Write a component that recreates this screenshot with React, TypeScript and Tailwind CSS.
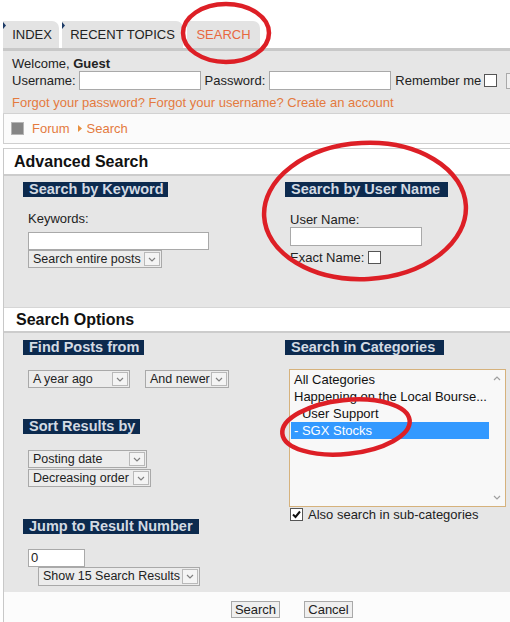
import React from 'react';

function Select({ children, className = '' }: { children: React.ReactNode; className?: string }) {
  return (
    <div className={`flex h-[18px] shrink-0 border border-[#a9a9a9] bg-[#ececec] text-[12.5px] text-[#222] ${className}`}>
      <span className="flex-1 whitespace-nowrap pl-[4px] leading-[16px]">{children}</span>
      <span className="my-[1px] mr-[1px] flex w-[16px] shrink-0 items-center justify-center border border-[#b9b9b9] bg-[#f4f4f4]">
        <svg width="8" height="5" viewBox="0 0 8 5">
          <path d="M1 1l3 3 3-3" stroke="#808080" strokeWidth="1.2" fill="none" />
        </svg>
      </span>
    </div>
  );
}

function Legend({ children, className = '' }: { children: React.ReactNode; className?: string }) {
  return (
    <div className={`h-[15px] whitespace-nowrap bg-[#0c2a4e] pl-[6px] text-[14.5px] font-bold leading-[15px] text-[#d3dae3] ${className}`}>
      {children}
    </div>
  );
}

function Checkbox({ checked = false }: { checked?: boolean }) {
  return (
    <span className="inline-flex h-[13px] w-[13px] shrink-0 items-center justify-center border border-[#555] bg-white">
      {checked && (
        <svg width="9" height="9" viewBox="0 0 9 9">
          <path d="M1 4.5l2.5 2.5L8 1.5" stroke="#111" strokeWidth="2" fill="none" />
        </svg>
      )}
    </span>
  );
}

function TabMark() {
  return (
    <svg className="absolute left-0 top-[1px]" width="3" height="7" viewBox="0 0 3 7">
      <path d="M0 0l3 3.5L0 7z" fill="#1c3a66" />
    </svg>
  );
}

export default function App() {
  return (
    <div className="relative h-[622px] w-[510px] overflow-hidden bg-white font-['Liberation_Sans',Arial,sans-serif] text-[13px] text-[#222]">
      {/* Tabs */}
      <div className="flex h-[48px] items-end pl-[3px]">
        <div className="relative flex h-[27px] w-[56px] items-center justify-center rounded-tr-[7px] bg-[#e3e3e3] pl-[2px]">
          <TabMark />
          INDEX
        </div>
        <div className="relative ml-[3px] flex h-[27px] w-[121px] items-center justify-center rounded-tr-[7px] bg-[#e3e3e3]">
          <TabMark />
          RECENT TOPICS
        </div>
        <div className="ml-[4px] flex h-[27px] w-[73px] items-center justify-center rounded-tl-[3px] rounded-tr-[7px] bg-[#e3e3e3] text-[#e8683f]">
          SEARCH
        </div>
      </div>

      {/* Login */}
      <div className="ml-[3px] h-[66px] w-[527px] border-t-[3px] border-b border-t-[#c8c8c8] border-b-[#d2d2d2] bg-[#e6e6e6] pl-[9px] pt-[5px]">
        <div className="leading-[15px]">
          Welcome, <b>Guest</b>
        </div>
        <div className="flex h-[19px] items-center whitespace-nowrap">
          <span className="shrink-0">Username:</span>
          <span className="ml-[3px] h-[19px] w-[122px] shrink-0 border border-[#a9a9a9] bg-white" />
          <span className="ml-[4px] shrink-0">Password:</span>
          <span className="ml-[4px] h-[19px] w-[122px] shrink-0 border border-[#a9a9a9] bg-white" />
          <span className="ml-[4px] shrink-0">Remember me</span>
          <span className="ml-[3px] flex shrink-0">
            <Checkbox />
          </span>
          <span className="ml-[9px] h-[16px] w-[40px] shrink-0 border border-[#aaa] bg-[#f0f0f0]" />
        </div>
        <div className="mt-[5px] leading-[15px] text-[#e47a3e]">
          Forgot your password? Forgot your username? Create an account
        </div>
      </div>

      {/* Breadcrumb */}
      <div className="ml-[3px] flex h-[30px] items-center border-b border-l border-[#cfcfcf] bg-[#fbfbfb] pl-[7px]">
        <span className="h-[13px] w-[13px] border border-[#b5b5b5] bg-[#858585]" />
        <span className="ml-[8px] text-[#e47a3e]">Forum</span>
        <svg className="ml-[8px]" width="4" height="7" viewBox="0 0 4 7">
          <path d="M0 0l4 3.5L0 7z" fill="#e8903e" />
        </svg>
        <span className="ml-[5px] text-[#e47a3e]">Search</span>
      </div>

      {/* Search form */}
      <div className="ml-[3px] mt-[4px] w-[527px] border-l border-[#c8c8c8]">
        <div className="flex h-[28px] items-center border-t border-b-2 border-t-[#cfcfcf] border-b-[#cccccc] bg-white pl-[10px] text-[16px] font-bold text-[#111]">
          Advanced Search
        </div>

        <div className="flex h-[131px] bg-[#e6e6e6] pt-[6px]">
          <div className="w-[281px] shrink-0 pl-[19px]">
            <Legend className="w-[145px]">Search by Keyword</Legend>
            <div className="ml-[5px] mt-[14px] leading-[15px]">Keywords:</div>
            <div className="ml-[5px] mt-[6px] h-[18px] w-[181px] border border-[#a9a9a9] bg-white" />
            <Select className="ml-[5px] w-[134px]">Search entire posts</Select>
          </div>
          <div>
            <Legend className="w-[163px]">Search by User Name</Legend>
            <div className="ml-[5px] mt-[15px] leading-[15px]">User Name:</div>
            <div className="ml-[5px] h-[19px] w-[132px] border border-[#a9a9a9] bg-white" />
            <div className="ml-[5px] mt-[4px] flex h-[15px] items-center">
              <span>Exact Name:</span>
              <span className="ml-[4px] flex">
                <Checkbox />
              </span>
            </div>
          </div>
        </div>

        <div className="flex h-[26px] items-center border-t border-b-2 border-t-[#d6d6d6] border-b-[#cccccc] bg-white pl-[12px] text-[16px] font-bold text-[#111]">
          Search Options
        </div>

        <div className="flex h-[259px] bg-[#e6e6e6] pt-[7px]">
          <div className="w-[281px] shrink-0 pl-[19px]">
            <Legend className="w-[121px]">Find Posts from</Legend>
            <div className="ml-[5px] mt-[15px] flex gap-[15px]">
              <Select className="w-[102px]">A year ago</Select>
              <Select className="w-[84px]">And newer</Select>
            </div>
            <Legend className="mt-[31px] w-[117px]">Sort Results by</Legend>
            <Select className="ml-[5px] mt-[16px] w-[119px]">Posting date</Select>
            <Select className="ml-[5px] mt-[1px] w-[123px]">Decreasing order</Select>
            <Legend className="mt-[32px] w-[176px]">Jump to Result Number</Legend>
            <div className="ml-[5px] mt-[15px] h-[18px] w-[57px] border border-[#a9a9a9] bg-white pl-[2px] leading-[16px]">0</div>
            <Select className="ml-[15px] h-[19px] w-[162px]">Show 15 Search Results</Select>
          </div>
          <div>
            <Legend className="w-[159px]">Search in Categories</Legend>
            <div className="ml-[4px] mt-[14px] flex h-[138px] w-[217px] border border-[#d6b27c] bg-[#f8f8f8] text-[#111]">
              <div className="w-[199px] pl-[1px] pt-[1px] leading-[17px]">
                <div className="pl-[3px]">All Categories</div>
                <div className="whitespace-nowrap pl-[3px]">Happening on the Local Bourse...</div>
                <div className="pl-[3px]">- User Support</div>
                <div className="bg-[#3399ff] pl-[3px] text-white">- SGX Stocks</div>
              </div>
              <div className="flex flex-1 flex-col items-center justify-between py-[6px]">
                <svg width="8" height="5" viewBox="0 0 8 5">
                  <path d="M1 4l3-3 3 3" stroke="#a0a0a0" strokeWidth="1.2" fill="none" />
                </svg>
                <svg width="8" height="5" viewBox="0 0 8 5">
                  <path d="M1 1l3 3 3-3" stroke="#a0a0a0" strokeWidth="1.2" fill="none" />
                </svg>
              </div>
            </div>
            <div className="ml-[5px] flex h-[15px] items-center">
              <Checkbox checked />
              <span className="ml-[5px]">Also search in sub-categories</span>
            </div>
          </div>
        </div>

        <div className="flex h-[30px] bg-[#fcfcfc] pl-[227px] pt-[9px]">
          <span className="h-[17px] w-[49px] border border-[#a9a9a9] bg-[#efefef] text-center leading-[15px]">Search</span>
          <span className="ml-[24px] h-[17px] w-[49px] border border-[#a9a9a9] bg-[#efefef] text-center leading-[15px]">Cancel</span>
        </div>
      </div>

      {/* Red annotation circles */}
      <svg className="pointer-events-none absolute left-0 top-0" width="510" height="622" viewBox="0 0 510 622">
        <ellipse cx="226" cy="33" rx="43" ry="29" stroke="#dd1f26" strokeWidth="4.5" fill="none" />
        <ellipse cx="365" cy="211" rx="101" ry="68" stroke="#dd1f26" strokeWidth="4.5" fill="none" transform="rotate(-3 365 211)" />
        <ellipse cx="346" cy="427" rx="64" ry="27" stroke="#dd1f26" strokeWidth="4.5" fill="none" transform="rotate(-6 346 427)" />
      </svg>
    </div>
  );
}
